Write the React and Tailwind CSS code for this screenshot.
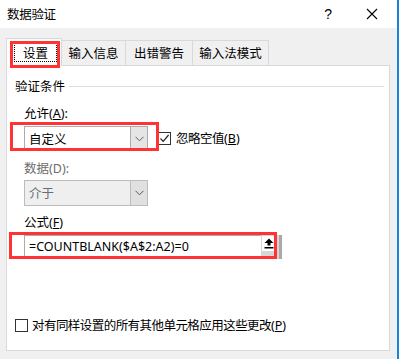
import React from "react";

const cjk = { fontFamily: '"Noto Sans CJK SC", "Noto Sans", sans-serif' };
const lat = { fontFamily: '"Noto Sans", "Open Sans", sans-serif' };

function Chevron({ color = "#606060" }) {
  return (
    <svg width="9" height="6" viewBox="0 0 9 6" className="block">
      <path d="M0.5 0.8 L4.5 4.8 L8.5 0.8" fill="none" stroke={color} strokeWidth="1" />
    </svg>
  );
}

function Acc({ pre = "(", k, post = ")" }) {
  return (
    <span className="text-[12.5px] tracking-normal" style={lat}>
      {pre}
      <span className="underline">{k}</span>
      {post}
    </span>
  );
}

export default function App() {
  return (
    <div
      className="relative w-[399px] h-[359px] bg-[#f0f0f0] overflow-hidden border-r-2 border-[#1883d7] box-border flex flex-col text-[12.5px] leading-[16px] text-black"
      style={cjk}
    >
      {/* Title bar */}
      <div className="h-[28px] bg-white flex items-center pl-[7px] shrink-0">
        <span className="text-[12.5px] tracking-[-0.3px]">数据验证</span>
        <span className="ml-auto text-[14px] leading-[14px] mr-[34px]" style={{ fontFamily: '"Liberation Sans", sans-serif' }}>?</span>
        <svg width="12" height="12" viewBox="0 0 12 12" className="mr-[19px]">
          <path d="M1 1 L11 11 M11 1 L1 11" stroke="#000" strokeWidth="1.1" fill="none" />
        </svg>
      </div>

      {/* Tabs */}
      <div className="mt-[10px] pl-[6px] flex items-end h-[27px] shrink-0">
        <div className="relative z-10 w-[56px] h-[28px] -mb-px bg-white border border-b-0 border-[#d9d9d9] flex items-start">
          <div className="mt-[4px] ml-[7px] w-[43px] h-[19px] border border-dotted border-black flex items-center justify-center">
            设置
          </div>
        </div>
        <div className="-ml-px w-[65px] h-[25px] border border-b-0 border-[#d9d9d9] bg-[#f0f0f0] flex items-center justify-center">输入信息</div>
        <div className="-ml-px w-[68px] h-[25px] border border-b-0 border-[#d9d9d9] bg-[#f0f0f0] flex items-center justify-center">出错警告</div>
        <div className="-ml-px w-[77px] h-[25px] border border-b-0 border-[#d9d9d9] bg-[#f0f0f0] flex items-center justify-center">输入法模式</div>
      </div>

      {/* Panel */}
      <div className="ml-[6px] w-[384px] h-[286px] bg-white border border-[#d9d9d9] flex flex-col shrink-0">
        <div className="mt-[12px] pl-[8px] pr-[5px] flex items-center">
          <span>验证条件</span>
          <div className="flex-1 ml-[4px] h-px bg-[#dcdcdc]" />
        </div>

        <div className="mt-[11px] pl-[17px]">
          允许<Acc k="A" post="):" />
        </div>

        <div className="mt-[4px] pl-[17px] flex items-center">
          <div className="w-[124px] h-[25px] bg-white border border-[#acacac] flex">
            <div className="flex-1 flex items-center pl-[4px]">自定义</div>
            <div className="w-[17px] bg-[#e5e5e5] border-l border-[#acacac] flex items-center justify-center">
              <Chevron />
            </div>
          </div>
          <div className="ml-[10px] w-[13px] h-[13px] border border-[#333] bg-white flex items-center justify-center">
            <svg width="11" height="11" viewBox="0 0 11 11">
              <path d="M1.5 5.5 L4.2 8.3 L9.6 2" fill="none" stroke="#222" strokeWidth="1.2" />
            </svg>
          </div>
          <span className="ml-[5px] tracking-[-0.5px]">
            忽略空值<Acc k="B" />
          </span>
        </div>

        <div className="mt-[9px] pl-[17px] text-[#6d6d6d]">
          数据<span className="text-[12.5px]" style={lat}>(D):</span>
        </div>

        <div className="mt-[3px] pl-[17px] flex">
          <div className="w-[124px] h-[26px] bg-[#efefef] border border-[#bcbcbc] flex">
            <div className="flex-1 flex items-center pl-[4px] text-[#6d6d6d]">介于</div>
            <div className="w-[17px] bg-[#e0e0e0] border-l border-[#bcbcbc] flex items-center justify-center">
              <Chevron color="#555" />
            </div>
          </div>
        </div>

        <div className="mt-[8px] pl-[17px]">
          公式<Acc k="F" />
        </div>

        <div className="mt-[4px] pl-[17px] flex">
          <div className="w-[237px] h-[24px] bg-white border border-[#acacac] border-r-0 flex items-center pl-[4px]">
            <span className="text-[12.5px]" style={lat}>=COUNTBLANK($A$2:A2)=0</span>
          </div>
          <div className="w-[21px] h-[24px] bg-[#d6d6d6] border-r-[3px] border-[#a9a9a9] flex items-start">
            <div className="ml-[1px] mt-[1px] w-[14px] h-[15px] bg-white flex items-center justify-center">
              <svg width="10" height="11" viewBox="0 0 10 11">
                <path d="M5 0.5 L9.5 5 L6.5 5 L6.5 7.5 L3.5 7.5 L3.5 5 L0.5 5 Z" fill="#000" />
                <rect x="0.5" y="9" width="9" height="1.5" fill="#000" />
              </svg>
            </div>
          </div>
        </div>

        <div className="mt-auto mb-[16px] pl-[8px] flex items-center">
          <div className="w-[13px] h-[13px] border border-[#333] bg-white" />
          <span className="ml-[4px] tracking-[-0.55px]">
            对有同样设置的所有其他单元格应用这些更改<Acc k="P" />
          </span>
        </div>
      </div>

      {/* Red annotation boxes */}
      <div className="absolute left-[10px] top-[41px] w-[50px] h-[27px] border-[3px] border-[#ff3333] z-20" />
      <div className="absolute left-[10px] top-[122px] w-[149px] h-[29px] border-[3px] border-[#ff3333] z-20" />
      <div className="absolute left-[9px] top-[232px] w-[268px] h-[27px] border-[3px] border-[#ff3333] z-20" />
    </div>
  );
}
